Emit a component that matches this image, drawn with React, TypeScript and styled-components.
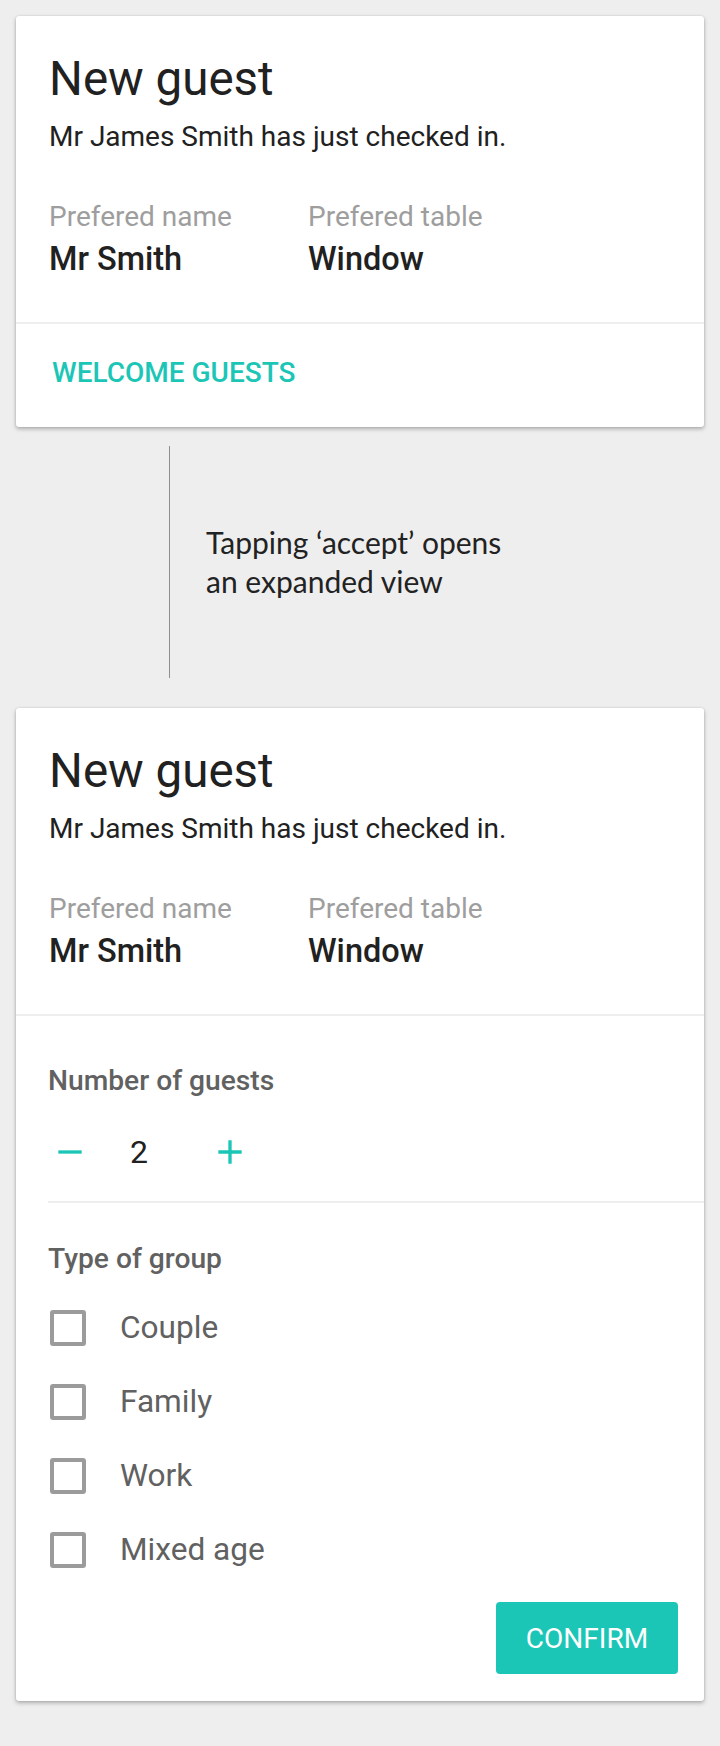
import React, { useState } from "react";
import styled, { createGlobalStyle } from "styled-components";

const TEAL = "#1cc6b6";

const GlobalStyle = createGlobalStyle`
  html, body {
    margin: 0;
    padding: 0;
    background: #eeeeee;
  }
  body {
    font-family: Roboto, "Noto Sans", sans-serif;
    -webkit-font-smoothing: antialiased;
  }
  * { box-sizing: border-box; }
`;

const Page = styled.main`
  padding: 16px 16px 45px;
  display: flex;
  flex-direction: column;
`;

const Card = styled.section`
  background: #ffffff;
  border-radius: 3px;
  box-shadow: 0 2px 4px rgba(0, 0, 0, 0.28), 0 0 2px rgba(0, 0, 0, 0.12);
  display: flex;
  flex-direction: column;
`;

const Header = styled.div`
  padding: 36px 32px 44px 33px;
`;

const Title = styled.h1`
  margin: 0;
  font-family: Roboto, sans-serif;
  font-weight: 400;
  font-size: 47.5px;
  line-height: 54px;
  color: #212121;
`;

const Subtitle = styled.p`
  margin: 15px 0 0;
  font-size: 28px;
  line-height: 32px;
  color: #212121;
`;

const Meta = styled.dl`
  margin: 48px 0 0;
  display: grid;
  grid-template-columns: 259px 1fr;
`;

const MetaItem = styled.div`
  display: flex;
  flex-direction: column;
`;

const MetaLabel = styled.dt`
  font-size: 28px;
  line-height: 32px;
  color: #9e9e9e;
`;

const MetaValue = styled.dd`
  margin: 7px 0 0;
  font-size: 32.5px;
  line-height: 38px;
  font-weight: 500;
  color: #212121;
`;

const Divider = styled.hr<{ $inset?: number }>`
  margin: 0 0 0 ${(p) => p.$inset ?? 0}px;
  border: none;
  height: 2px;
  background: #eeeeee;
`;

const Footer = styled.div`
  padding: 33px 32px 38px;
`;

const TextButton = styled.button`
  border: none;
  background: none;
  padding: 0 4px;
  font-family: Roboto, sans-serif;
  font-weight: 500;
  font-size: 28px;
  line-height: 32px;
  color: ${TEAL};
  text-transform: uppercase;
  cursor: pointer;
`;

const Connector = styled.div`
  display: flex;
  align-items: center;
  padding: 19px 0 30px;
`;

const ConnectorLine = styled.div`
  margin-left: 153px;
  width: 1px;
  height: 232px;
  background: #8f8f8f;
`;

const Note = styled.p`
  margin: 0 0 0 36px;
  font-family: Lato, "Open Sans", sans-serif;
  font-size: 30px;
  line-height: 39px;
  color: #222222;
`;

const Section = styled.div<{ $top: number }>`
  padding: ${(p) => p.$top}px 32px 0;
`;

const SectionLabel = styled.h2`
  margin: 0;
  font-size: 28.2px;
  line-height: 32px;
  font-weight: 500;
  color: #616161;
`;

const Stepper = styled.div`
  margin: 33px 0 27px;
  display: flex;
  align-items: center;
  height: 44px;
`;

const IconButton = styled.button<{ $offset?: number }>`
  width: 44px;
  height: 44px;
  margin-left: ${(p) => p.$offset ?? 0}px;
  padding: 0;
  border: none;
  background: none;
  display: flex;
  align-items: center;
  justify-content: center;
  color: ${TEAL};
  cursor: pointer;
`;

const StepValue = styled.span`
  width: 94px;
  text-align: center;
  font-size: 32px;
  line-height: 38px;
  color: #212121;
`;

const CheckList = styled.div`
  margin-top: 35px;
  display: flex;
  flex-direction: column;
  gap: 38px;
`;

const CheckRow = styled.label`
  display: flex;
  align-items: center;
  height: 36px;
  cursor: pointer;
`;

const Box = styled.span<{ $checked: boolean }>`
  margin-left: 2px;
  width: 36px;
  height: 36px;
  border: 4px solid ${(p) => (p.$checked ? TEAL : "#9b9b9b")};
  background: ${(p) => (p.$checked ? TEAL : "transparent")};
  border-radius: 3px;
  flex: none;
`;

const CheckText = styled.span`
  margin-left: 34px;
  font-size: 31.6px;
  line-height: 36px;
  color: #616161;
`;

const Actions = styled.div`
  display: flex;
  justify-content: flex-end;
  padding: 34px 26px 27px;
`;

const PrimaryButton = styled.button`
  width: 182px;
  height: 72px;
  border: none;
  border-radius: 4px;
  background: ${TEAL};
  color: #ffffff;
  font-family: Roboto, sans-serif;
  font-size: 28px;
  font-weight: 400;
  text-transform: uppercase;
  cursor: pointer;
`;

const MinusIcon = () => (
  <svg width="40" height="40" viewBox="0 0 24 24" fill="currentColor">
    <path d="M19 13H5v-2h14v2z" />
  </svg>
);

const PlusIcon = () => (
  <svg width="40" height="40" viewBox="0 0 24 24" fill="currentColor">
    <path d="M19 13h-6v6h-2v-6H5v-2h6V5h2v6h6v2z" />
  </svg>
);

const GuestHeader = () => (
  <Header>
    <Title>New guest</Title>
    <Subtitle>Mr James Smith has just checked in.</Subtitle>
    <Meta>
      <MetaItem>
        <MetaLabel>Prefered name</MetaLabel>
        <MetaValue>Mr Smith</MetaValue>
      </MetaItem>
      <MetaItem>
        <MetaLabel>Prefered table</MetaLabel>
        <MetaValue>Window</MetaValue>
      </MetaItem>
    </Meta>
  </Header>
);

const groups = ["Couple", "Family", "Work", "Mixed age"];

export default function App() {
  const [count, setCount] = useState(2);
  const [checked, setChecked] = useState<Record<string, boolean>>({});

  return (
    <>
      <GlobalStyle />
      <Page>
        <Card>
          <GuestHeader />
          <Divider />
          <Footer>
            <TextButton>Welcome guests</TextButton>
          </Footer>
        </Card>

        <Connector>
          <ConnectorLine />
          <Note>
            Tapping ‘accept’ opens
            <br />
            an expanded view
          </Note>
        </Connector>

        <Card>
          <GuestHeader />
          <Divider />
          <Section $top={49}>
            <SectionLabel>Number of guests</SectionLabel>
            <Stepper>
              <IconButton aria-label="Decrease" onClick={() => setCount((c) => Math.max(0, c - 1))}>
                <MinusIcon />
              </IconButton>
              <StepValue>{count}</StepValue>
              <IconButton aria-label="Increase" $offset={22} onClick={() => setCount((c) => c + 1)}>
                <PlusIcon />
              </IconButton>
            </Stepper>
          </Section>
          <Divider $inset={32} />
          <Section $top={40}>
            <SectionLabel>Type of group</SectionLabel>
            <CheckList>
              {groups.map((g) => (
                <CheckRow key={g} onClick={() => setChecked((s) => ({ ...s, [g]: !s[g] }))}>
                  <Box $checked={!!checked[g]} />
                  <CheckText>{g}</CheckText>
                </CheckRow>
              ))}
            </CheckList>
          </Section>
          <Actions>
            <PrimaryButton>Confirm</PrimaryButton>
          </Actions>
        </Card>
      </Page>
    </>
  );
}
